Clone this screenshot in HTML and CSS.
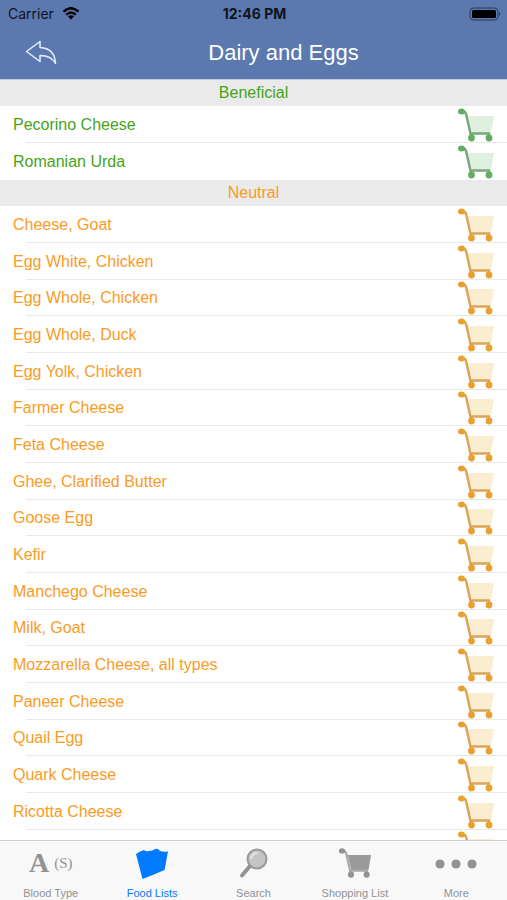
FILE: index.html
```html
<!DOCTYPE html>
<html lang="en">
<head>
    <meta charset="utf-8">
    <meta name="viewport" content="width=device-width, initial-scale=1.0">
    <title>Dairy and Eggs</title>
    <link rel="stylesheet" href="styles.css">
</head>

<body>
    <svg class="sprite" aria-hidden="true">
        <symbol id="cart" viewBox="0 0 38 34">
            <path class="basket" d="M11 8H37L34 25H15Z" />
            <path class="frame" d="M4 3.500H6Q8.500 3.500 9.200 6.500L13.500 25.500H33" />
            <path class="frame" d="M14 25V30M32 25V30" />
            <ellipse class="knob" cx="4.500" cy="3.500" rx="3.500" ry="3" />
            <circle class="knob" cx="14.500" cy="30" r="3.400" />
            <circle class="knob" cx="32" cy="30" r="3.400" />
        </symbol>
    </svg>
    <header>
        <div class="status">
            <div class="carrier">
                <span>Carrier</span>
                <svg class="wifi" viewBox="0 0 18 13">
                    <path d="M1.500 4.700Q9-2.200 16.500 4.700M4.200 7.600Q9 3.300 13.800 7.600" />
                    <path class="dot" d="M6 9.400Q9 6.900 12 9.400L9 12.500Z" />
                </svg>
            </div>
            <time>12:46 PM</time>
            <svg class="battery" viewBox="0 0 32 14">
                <rect class="case" x="1" y="1" width="28" height="12" rx="3.500" />
                <rect x="3" y="3" width="24" height="8" rx="1.500" />
                <path d="M30.300 5Q32 7 30.300 9Z" />
            </svg>
        </div>
        <div class="title-bar">
            <button class="back" aria-label="Back">
                <svg viewBox="0 0 32 26">
                    <path d="M1.500 11.500L15 1.500V7.500C24 8 30 13 30.500 23.500C27 17 22 15.500 15 15.500V21.500Z" />
                </svg>
            </button>
            <h1>Dairy and Eggs</h1>
        </div>
    </header>
    <main>
        <section class="beneficial">
            <h2>Beneficial</h2>
            <ul>
                <li><span>Pecorino Cheese</span><button class="add" aria-label="Add Pecorino Cheese"><svg><use href="#cart" /></svg></button></li>
                <li><span>Romanian Urda</span><button class="add" aria-label="Add Romanian Urda"><svg><use href="#cart" /></svg></button></li>
            </ul>
        </section>
        <section class="neutral">
            <h2>Neutral</h2>
            <ul>
                <li><span>Cheese, Goat</span><button class="add" aria-label="Add Cheese, Goat"><svg><use href="#cart" /></svg></button></li>
                <li><span>Egg White, Chicken</span><button class="add" aria-label="Add Egg White, Chicken"><svg><use href="#cart" /></svg></button></li>
                <li><span>Egg Whole, Chicken</span><button class="add" aria-label="Add Egg Whole, Chicken"><svg><use href="#cart" /></svg></button></li>
                <li><span>Egg Whole, Duck</span><button class="add" aria-label="Add Egg Whole, Duck"><svg><use href="#cart" /></svg></button></li>
                <li><span>Egg Yolk, Chicken</span><button class="add" aria-label="Add Egg Yolk, Chicken"><svg><use href="#cart" /></svg></button></li>
                <li><span>Farmer Cheese</span><button class="add" aria-label="Add Farmer Cheese"><svg><use href="#cart" /></svg></button></li>
                <li><span>Feta Cheese</span><button class="add" aria-label="Add Feta Cheese"><svg><use href="#cart" /></svg></button></li>
                <li><span>Ghee, Clarified Butter</span><button class="add" aria-label="Add Ghee, Clarified Butter"><svg><use href="#cart" /></svg></button></li>
                <li><span>Goose Egg</span><button class="add" aria-label="Add Goose Egg"><svg><use href="#cart" /></svg></button></li>
                <li><span>Kefir</span><button class="add" aria-label="Add Kefir"><svg><use href="#cart" /></svg></button></li>
                <li><span>Manchego Cheese</span><button class="add" aria-label="Add Manchego Cheese"><svg><use href="#cart" /></svg></button></li>
                <li><span>Milk, Goat</span><button class="add" aria-label="Add Milk, Goat"><svg><use href="#cart" /></svg></button></li>
                <li><span>Mozzarella Cheese, all types</span><button class="add" aria-label="Add Mozzarella Cheese, all types"><svg><use href="#cart" /></svg></button></li>
                <li><span>Paneer Cheese</span><button class="add" aria-label="Add Paneer Cheese"><svg><use href="#cart" /></svg></button></li>
                <li><span>Quail Egg</span><button class="add" aria-label="Add Quail Egg"><svg><use href="#cart" /></svg></button></li>
                <li><span>Quark Cheese</span><button class="add" aria-label="Add Quark Cheese"><svg><use href="#cart" /></svg></button></li>
                <li><span>Ricotta Cheese</span><button class="add" aria-label="Add Ricotta Cheese"><svg><use href="#cart" /></svg></button></li>
                <li><span></span><button class="add" aria-label="Add"><svg><use href="#cart" /></svg></button></li>
            </ul>
        </section>
    </main>
    <nav>
        <a href="#">
            <span class="icon blood"><b>A</b><span>(S)</span></span>
            Blood Type
        </a>
        <a href="#" class="active">
            <span class="icon">
                <svg viewBox="0 0 34 34">
                    <path d="M1 6Q5 3 9 2Q11 4 14 3Q18 3 20 1Q23 0 25 3Q29 4 33 3.500L29.500 22Q18 27 7.500 31Z" />
                </svg>
            </span>
            Food Lists
        </a>
        <a href="#">
            <span class="icon">
                <svg viewBox="0 0 34 34">
                    <path class="handle" d="M13 18L5 27.500" />
                    <circle class="lens" cx="20" cy="11" r="9.500" />
                    <path class="shine" d="M14 11Q15 5 21 5" />
                </svg>
            </span>
            Search
        </a>
        <a href="#">
            <span class="icon"><svg class="tab-cart"><use href="#cart" /></svg></span>
            Shopping List
        </a>
        <a href="#">
            <span class="icon">
                <svg class="dots" viewBox="0 0 42 34">
                    <circle cx="5" cy="16" r="4.500" />
                    <circle cx="21" cy="16" r="4.500" />
                    <circle cx="37" cy="16" r="4.500" />
                </svg>
            </span>
            More
        </a>
    </nav>
</body>
</html>
```
FILE: styles.css
```css
* {
    box-sizing: border-box;
}

body {
    margin: 0;
    height: 100vh;
    display: flex;
    flex-direction: column;
    overflow: hidden;
    background-color: #fff;
    font-family: "Liberation Sans", Arial, sans-serif;
}

h1,
h2,
ul {
    margin: 0;
    padding: 0;
    font-weight: normal;
}

button {
    border: 0;
    padding: 0;
    background: none;
}

svg {
    display: block;
}

.sprite {
    display: none;
}

header {
    background-color: #5b79ae;
    border-bottom: 1px solid #c3cbdc;
}

.status {
    display: grid;
    grid-template-columns: 1fr auto 1fr;
    align-items: center;
    height: 27px;
    padding: 0 6px 0 8px;
    font-family: Inter, sans-serif;
    font-size: 14px;
    color: #10131c;
}

.carrier {
    display: flex;
    align-items: center;
    gap: 8px;
}

.status time {
    font-weight: 700;
}

.wifi {
    width: 18px;
    height: 13px;
    fill: none;
    stroke: #000;
    stroke-width: 2.5;
}

.wifi .dot {
    fill: #000;
    stroke: none;
}

.battery {
    width: 32px;
    height: 14px;
    justify-self: end;
}

.battery .case {
    fill: none;
    stroke: #2c3b58;
}

.title-bar {
    display: flex;
    align-items: center;
    height: 52px;
}

.back {
    width: 60px;
    padding-left: 25px;
}

.back svg {
    width: 32px;
    height: 26px;
    fill: none;
    stroke: #e4efff;
    stroke-width: 1.5;
    stroke-linejoin: round;
}

h1 {
    flex: 1;
    text-align: center;
    font-size: 22px;
    color: #fff;
}

main {
    flex: 1;
    min-height: 0;
    overflow: hidden;
}

h2 {
    background-color: #eaeaea;
    text-align: center;
    font-size: 16px;
    line-height: 26px;
}

.beneficial {
    --knob: #62ad61;
    --frame: #78a779;
    --basket: #dff0df;
    color: #45a516;
}

.neutral {
    --knob: #eaa02e;
    --frame: #dba456;
    --basket: #fbedd0;
    color: #f99b25;
}

li {
    position: relative;
    display: flex;
    align-items: center;
    justify-content: space-between;
    height: 37px;
    padding: 0 12px 0 13px;
    font-size: 16px;
}

/* three rows to 110px */
li:nth-child(3n) {
    height: 36px;
}

/* inset separator */
li:not(:last-child)::after {
    content: "";
    position: absolute;
    left: 26px;
    right: 0;
    bottom: 0;
    height: 1px;
    background-color: #e9e9e9;
}

.add svg {
    width: 38px;
    height: 34px;
}

.basket {
    fill: var(--basket);
}

.frame {
    fill: none;
    stroke: var(--frame);
    stroke-width: 2.5;
}

.knob {
    fill: var(--knob);
}

nav {
    display: flex;
    height: 60px;
    background-color: #f8f8f8;
    border-top: 1px solid #cfcfcf;
}

nav a {
    flex: 1;
    display: flex;
    flex-direction: column;
    align-items: center;
    gap: 4px;
    padding-top: 7px;
    font-size: 11px;
    line-height: 14px;
    color: #929292;
    text-decoration: none;
    --knob: #929292;
    --frame: #a8a8a8;
    --basket: #9a9a9a;
}

nav a.active {
    color: #007aff;
}

.icon {
    display: flex;
    align-items: center;
    justify-content: center;
    height: 34px;
}

.icon svg {
    width: 34px;
    height: 34px;
    fill: currentColor;
}

.icon .dots {
    width: 42px;
}

.icon .tab-cart {
    height: 32px;
    margin-bottom: 4px;
}

.blood {
    gap: 5px;
    padding-bottom: 4px;
    font-family: "Liberation Serif", serif;
    font-size: 15px;
}

.blood b {
    font-size: 28px;
}

.handle {
    fill: none;
    stroke: #929292;
    stroke-width: 4;
    stroke-linecap: round;
}

.lens {
    fill: #c4c4c4;
    stroke: #999;
    stroke-width: 2;
}

.shine {
    fill: none;
    stroke: #e4e4e4;
    stroke-width: 2;
}
```
